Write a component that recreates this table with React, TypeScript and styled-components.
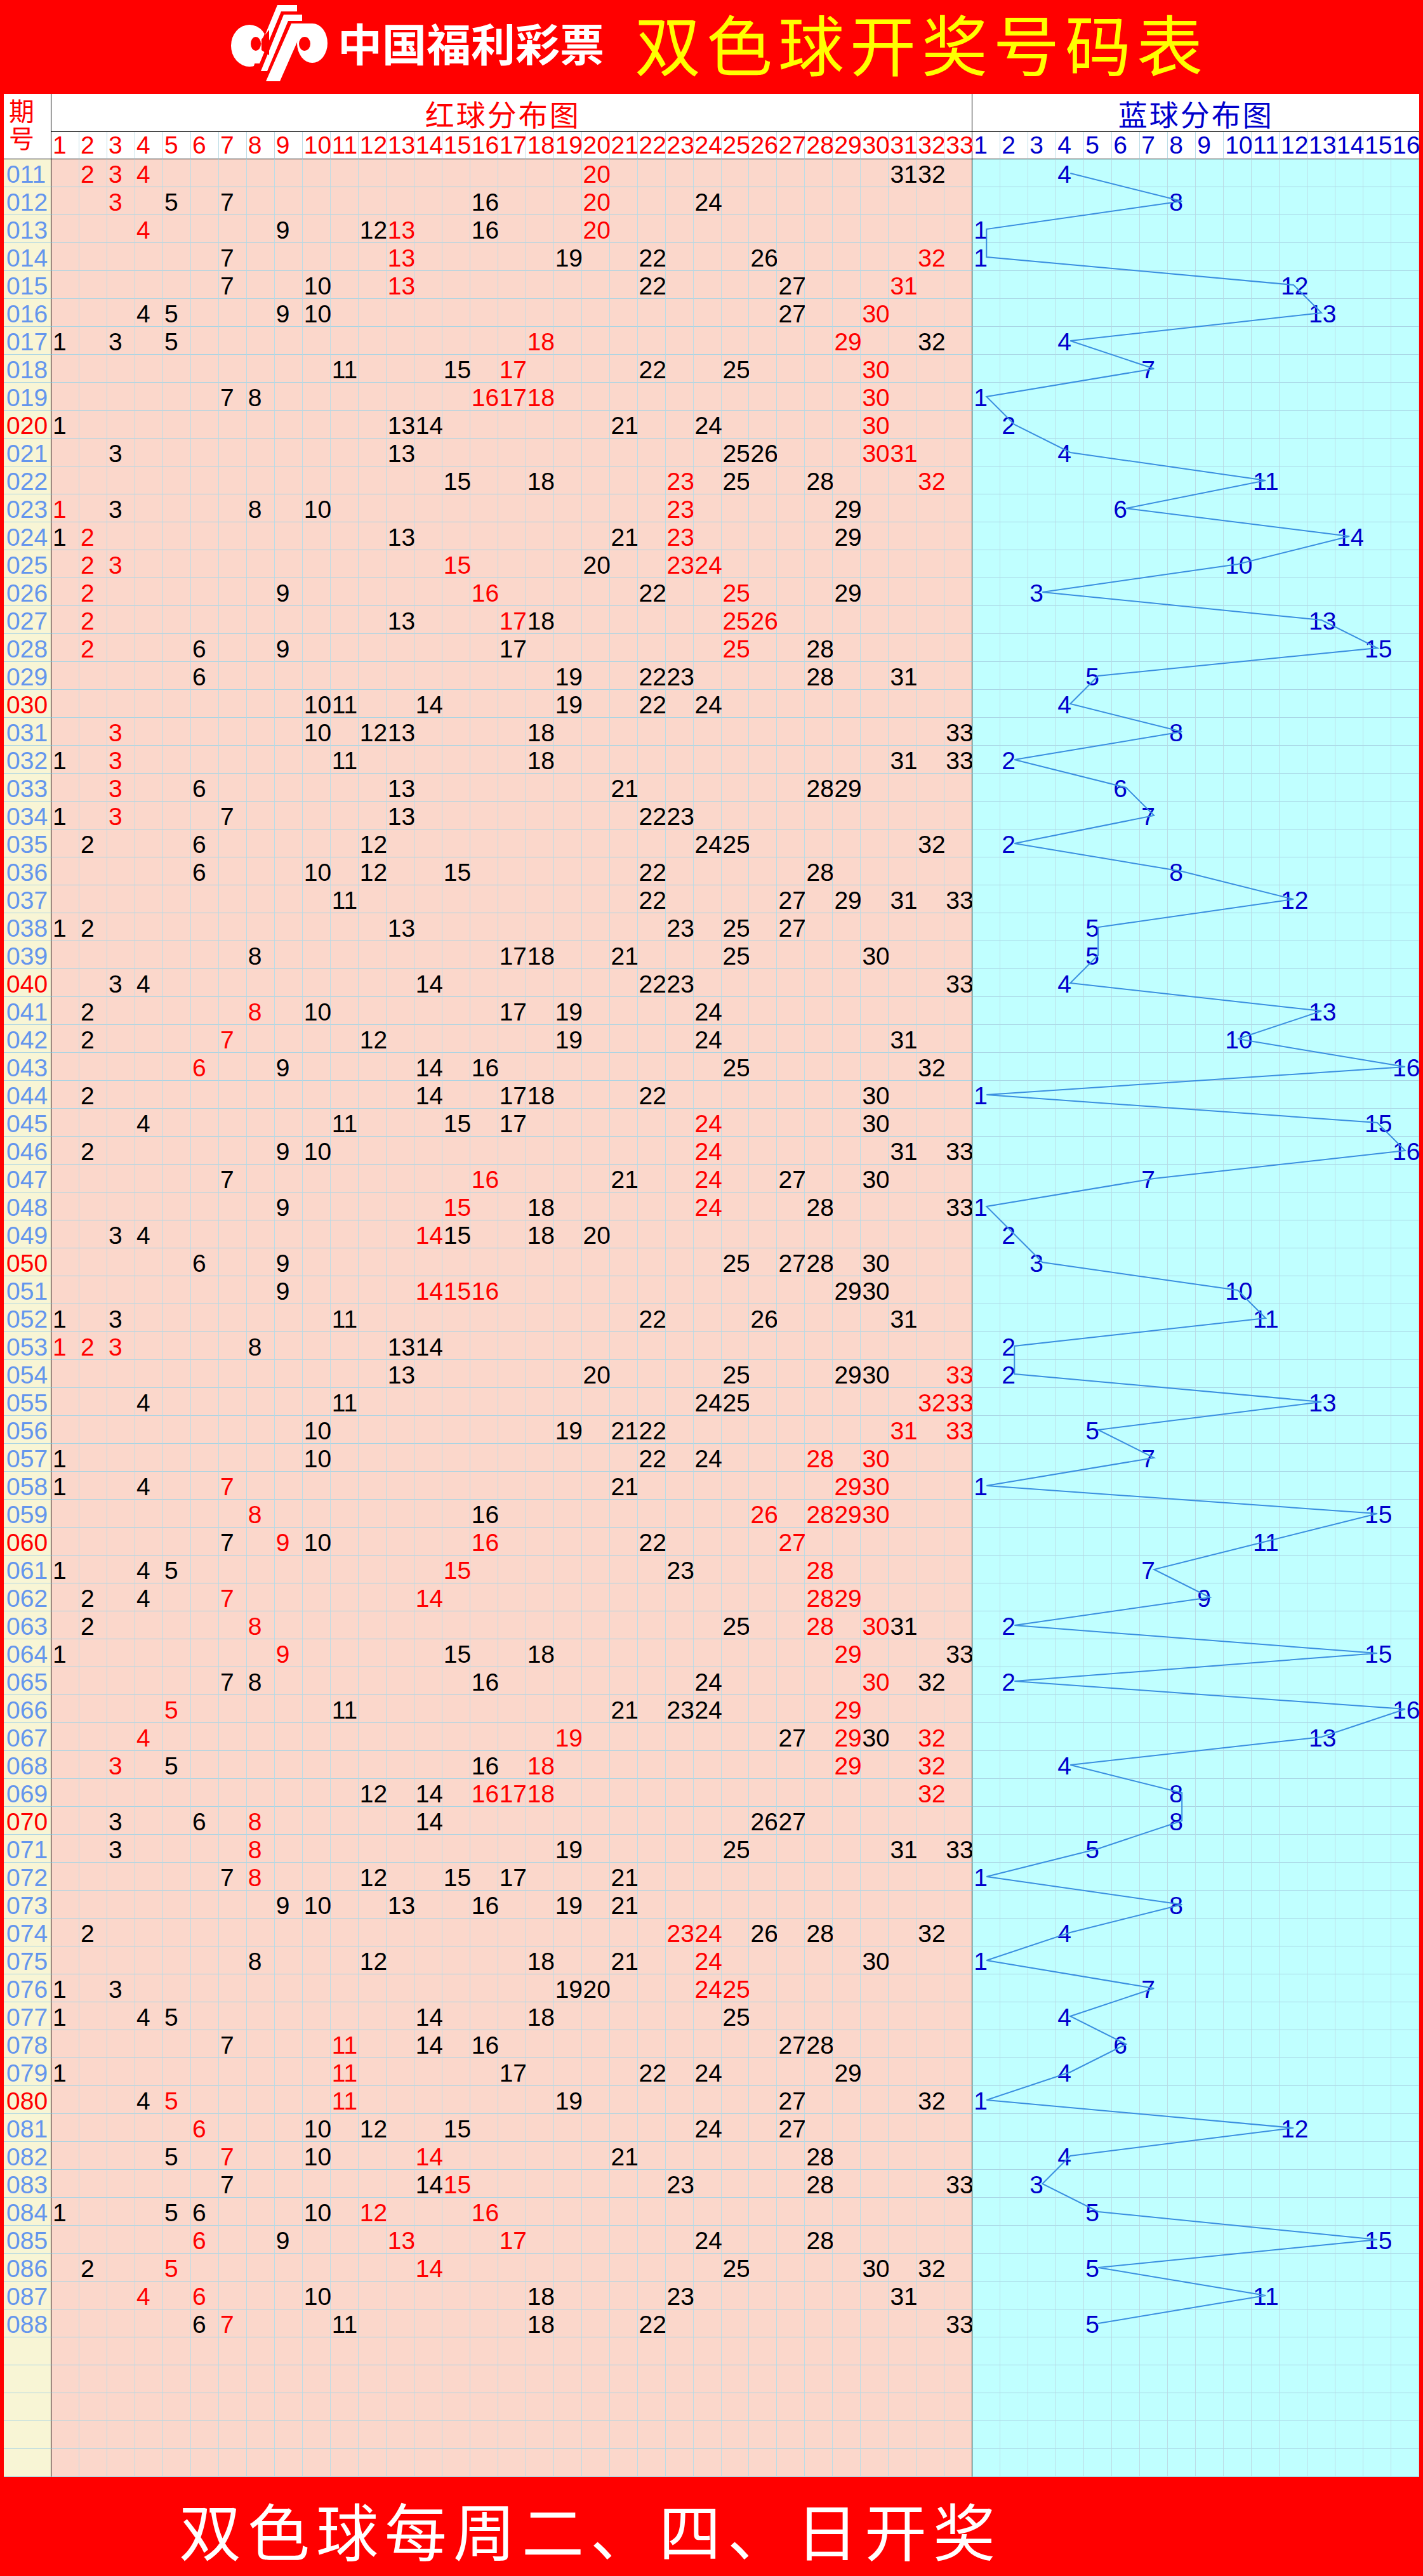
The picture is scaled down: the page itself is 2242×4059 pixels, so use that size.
import React from 'react';
import styled, {createGlobalStyle} from 'styled-components';

const GlobalStyle = createGlobalStyle`
  html, body {
    margin: 0;
    padding: 0;
    background: #ff0000;
  }
  body {
    font-family: "Liberation Sans", Arial, sans-serif;
  }
  * {
    box-sizing: border-box;
  }
`;

const TABLE_W = 2230;
const LABEL_W = 75;
const COL_W = (TABLE_W - LABEL_W) / 49;
const ROW_H = 44;
const CJK = '"Noto Sans CJK SC", "Noto Sans", sans-serif';

// 红球 (* = 标红) | 蓝球
const DRAWS = [
    '2* 3* 4* 20* 31 32|4',
    '3* 5 7 16 20* 24|8',
    '4* 9 12 13* 16 20*|1',
    '7 13* 19 22 26 32*|1',
    '7 10 13* 22 27 31*|12',
    '4 5 9 10 27 30*|13',
    '1 3 5 18* 29* 32|4',
    '11 15 17* 22 25 30*|7',
    '7 8 16* 17* 18* 30*|1',
    '1 13 14 21 24 30*|2',
    '3 13 25 26 30* 31*|4',
    '15 18 23* 25 28 32*|11',
    '1* 3 8 10 23* 29|6',
    '1 2* 13 21 23* 29|14',
    '2* 3* 15* 20 23* 24*|10',
    '2* 9 16* 22 25* 29|3',
    '2* 13 17* 18 25* 26*|13',
    '2* 6 9 17 25* 28|15',
    '6 19 22 23 28 31|5',
    '10 11 14 19 22 24|4',
    '3* 10 12 13 18 33|8',
    '1 3* 11 18 31 33|2',
    '3* 6 13 21 28 29|6',
    '1 3* 7 13 22 23|7',
    '2 6 12 24 25 32|2',
    '6 10 12 15 22 28|8',
    '11 22 27 29 31 33|12',
    '1 2 13 23 25 27|5',
    '8 17 18 21 25 30|5',
    '3 4 14 22 23 33|4',
    '2 8* 10 17 19 24|13',
    '2 7* 12 19 24 31|10',
    '6* 9 14 16 25 32|16',
    '2 14 17 18 22 30|1',
    '4 11 15 17 24* 30|15',
    '2 9 10 24* 31 33|16',
    '7 16* 21 24* 27 30|7',
    '9 15* 18 24* 28 33|1',
    '3 4 14* 15 18 20|2',
    '6 9 25 27 28 30|3',
    '9 14* 15* 16* 29 30|10',
    '1 3 11 22 26 31|11',
    '1* 2* 3* 8 13 14|2',
    '13 20 25 29 30 33*|2',
    '4 11 24 25 32* 33*|13',
    '10 19 21 22 31* 33*|5',
    '1 10 22 24 28* 30*|7',
    '1 4 7* 21 29* 30*|1',
    '8* 16 26* 28* 29* 30*|15',
    '7 9* 10 16* 22 27*|11',
    '1 4 5 15* 23 28*|7',
    '2 4 7* 14* 28* 29*|9',
    '2 8* 25 28* 30* 31|2',
    '1 9* 15 18 29* 33|15',
    '7 8 16 24 30* 32|2',
    '5* 11 21 23 24 29*|16',
    '4* 19* 27 29* 30 32*|13',
    '3* 5 16 18* 29* 32*|4',
    '12 14 16* 17* 18* 32*|8',
    '3 6 8* 14 26 27|8',
    '3 8* 19 25 31 33|5',
    '7 8* 12 15 17 21|1',
    '9 10 13 16 19 21|8',
    '2 23* 24* 26 28 32|4',
    '8 12 18 21 24* 30|1',
    '1 3 19 20 24* 25*|7',
    '1 4 5 14 18 25|4',
    '7 11* 14 16 27 28|6',
    '1 11* 17 22 24 29|4',
    '4 5* 11* 19 27 32|1',
    '6* 10 12 15 24 27|12',
    '5 7* 10 14* 21 28|4',
    '7 14 15* 23 28 33|3',
    '1 5 6 10 12* 16*|5',
    '6* 9 13* 17* 24 28|15',
    '2 5* 14* 25 30 32|5',
    '4* 6* 10 18 23 31|11',
    '6 7* 11 18 22 33|5',
];

type Ball = { n: number; hot: boolean };
type Draw = { period: string; reds: Ball[]; blue: number };

const rows: Draw[] = DRAWS.map((s, i) => {
    const [reds, blue] = s.split('|');
    return {
        period: String(11 + i).padStart(3, '0'),
        reds: reds.split(' ').map(t => ({n: parseInt(t, 10), hot: t.endsWith('*')})),
        blue: Number(blue),
    };
});

const Page = styled.div`
  width: 2242px;
  background: #ff0000;
`;

const Banner = styled.div`
  height: 148px;
  display: flex;
  align-items: center;
  padding: 0 0 14px 364px;
`;

const LogoText = styled.div`
  margin-left: 16px;
  font-family: ${CJK};
  font-weight: 700;
  font-size: 70px;
  line-height: 1.4;
  color: #fff;
  white-space: nowrap;
`;

const Title = styled.div`
  margin-left: 48px;
  font-family: ${CJK};
  font-size: 104px;
  line-height: 1.2;
  letter-spacing: 9px;
  color: #ffff00;
  white-space: nowrap;
`;

const Table = styled.div`
  width: ${TABLE_W}px;
  margin: 0 6px;
  background: #fff;
`;

const Head = styled.div`
  display: grid;
  grid-template-columns: ${LABEL_W}px repeat(49, minmax(0, 1fr));
  grid-template-rows: 60px 43px;
`;

const Corner = styled.div`
  grid-row: 1 / 3;
  grid-column: 1;
  border-right: 1px solid #000;
  border-bottom: 1px solid #000;
  padding: 7px 0 0 6px;
`;

const CornerText = styled.span`
  display: block;
  writing-mode: vertical-rl;
  font-family: ${CJK};
  font-size: 40px;
  line-height: 44px;
  letter-spacing: 3px;
  color: #ff0000;
`;

const SectionTitle = styled.div<{ $blue?: boolean }>`
  grid-row: 1;
  grid-column: ${p => (p.$blue ? '35 / 51' : '2 / 35')};
  display: flex;
  align-items: center;
  justify-content: center;
  padding-right: ${p => (p.$blue ? 0 : 28)}px;
  border-bottom: 1px solid #000;
  border-right: ${p => (p.$blue ? 'none' : '1px solid #000')};
  font-family: ${CJK};
  font-size: 46px;
  letter-spacing: 3px;
  color: ${p => (p.$blue ? '#0000cc' : '#ff0000')};
`;

const HeadNum = styled.div<{ $blue?: boolean; $edge?: boolean; $col: number }>`
  grid-row: 2;
  grid-column: ${p => p.$col};
  min-width: 0;
  padding-left: 2px;
  border-right: 1px solid ${p => (p.$edge ? '#000' : '#bcdce6')};
  border-bottom: 1px solid #000;
  font-size: 39px;
  line-height: 42px;
  white-space: nowrap;
  color: ${p => (p.$blue ? '#0000cc' : '#ff0000')};
`;

const Body = styled.div`
  position: relative;
`;

const Row = styled.div`
  display: grid;
  grid-template-columns: ${LABEL_W}px repeat(49, minmax(0, 1fr));
  height: ${ROW_H}px;
`;

const Cell = styled.div`
  min-width: 0;
  height: ${ROW_H}px;
  padding: 2px 0 0 2px;
  border-right: 1px solid #bcdce6;
  border-bottom: 1px solid #a8d4e4;
  font-size: 39px;
  line-height: 44px;
  white-space: nowrap;
`;

const Label = styled(Cell)<{ $mark?: boolean }>`
  padding-left: 4px;
  background: #f8f5d5;
  border-right-color: #000;
  color: ${p => (p.$mark ? '#ff0000' : '#6495ed')};
`;

const RedCell = styled(Cell)<{ $edge?: boolean }>`
  background: #fbd7cb;
  ${p => p.$edge && 'border-right-color: #000;'}
`;

const BlueCell = styled(Cell)`
  background: #c0ffff;
  color: #0000cc;
`;

const Num = styled.span<{ $hot?: boolean }>`
  color: ${p => (p.$hot ? '#ff0000' : '#000')};
`;

const Chart = styled.svg`
  position: absolute;
  top: 0;
  left: 0;
  pointer-events: none;
`;

const Footer = styled.div`
  height: 156px;
  display: flex;
  align-items: center;
  padding: 8px 0 0 282px;
  font-family: ${CJK};
  font-size: 98px;
  line-height: 1.3;
  letter-spacing: 10px;
  color: #fff;
  white-space: nowrap;
`;

function Logo() {
    return (
        <svg width="152" height="121" viewBox="0 0 152 121">
            <defs>
                <clipPath id="cClip">
                    <polygon points="-5,0 68,0 28,121 -5,121"/>
                </clipPath>
            </defs>
            <g fill="#fff">
                <ellipse cx="29" cy="65" rx="29" ry="33" clipPath="url(#cClip)"/>
                <polygon points="35,93 73,1 104,1 104,11 79,11 45,93"/>
                <polygon points="47,105 83,16 112,16 112,26 90,26 57,105"/>
                <polygon points="55,121 95,30 117,30 77,121"/>
                <ellipse cx="128" cy="61" rx="24" ry="31"/>
                <rect x="100" y="30" width="28" height="10"/>
            </g>
            <g fill="#ff0000">
                <ellipse cx="39" cy="62" rx="8" ry="11"/>
                <polygon points="48,55 60,40 60,80 48,72"/>
                <ellipse cx="116" cy="62" rx="9" ry="11"/>
            </g>
        </svg>
    );
}

function EmptyRow() {
    return (
        <Row>
            <Label/>
            {Array.from({length: 33}, (_, k) => <RedCell key={k} $edge={k === 32}/>)}
            {Array.from({length: 16}, (_, k) => <BlueCell key={k}/>)}
        </Row>
    );
}

function DrawRow({draw}: { draw: Draw }) {
    return (
        <Row>
            <Label $mark={Number(draw.period) % 10 === 0}>{draw.period}</Label>
            {Array.from({length: 33}, (_, k) => {
                const ball = draw.reds.find(b => b.n === k + 1);
                return (
                    <RedCell key={k} $edge={k === 32}>
                        {ball && <Num $hot={ball.hot}>{ball.n}</Num>}
                    </RedCell>
                );
            })}
            {Array.from({length: 16}, (_, k) => (
                <BlueCell key={k}>{draw.blue === k + 1 ? k + 1 : null}</BlueCell>
            ))}
        </Row>
    );
}

function App() {
    const chartH = rows.length * ROW_H;
    const points = rows
        .map((r, i) => `${(LABEL_W + (32 + r.blue) * COL_W + 22).toFixed(1)},${i * ROW_H + 22}`)
        .join(' ');

    return (
        <Page>
            <GlobalStyle/>
            <Banner>
                <Logo/>
                <LogoText>中国福利彩票</LogoText>
                <Title>双色球开奖号码表</Title>
            </Banner>

            <Table>
                <Head>
                    <Corner><CornerText>期号</CornerText></Corner>
                    <SectionTitle>红球分布图</SectionTitle>
                    <SectionTitle $blue>蓝球分布图</SectionTitle>
                    {Array.from({length: 33}, (_, k) => (
                        <HeadNum key={'r' + k} $col={k + 2} $edge={k === 32}>{k + 1}</HeadNum>
                    ))}
                    {Array.from({length: 16}, (_, k) => (
                        <HeadNum key={'b' + k} $col={k + 35} $blue>{k + 1}</HeadNum>
                    ))}
                </Head>

                <Body>
                    {rows.map(r => <DrawRow key={r.period} draw={r}/>)}
                    <Chart width={TABLE_W} height={chartH} viewBox={`0 0 ${TABLE_W} ${chartH}`}>
                        <polyline points={points} fill="none" stroke="#3a8fe0" strokeWidth="2"/>
                    </Chart>
                </Body>
                {Array.from({length: 5}, (_, i) => <EmptyRow key={i}/>)}
            </Table>

            <Footer>双色球每周二、四、日开奖</Footer>
        </Page>
    );
}

export default App;
